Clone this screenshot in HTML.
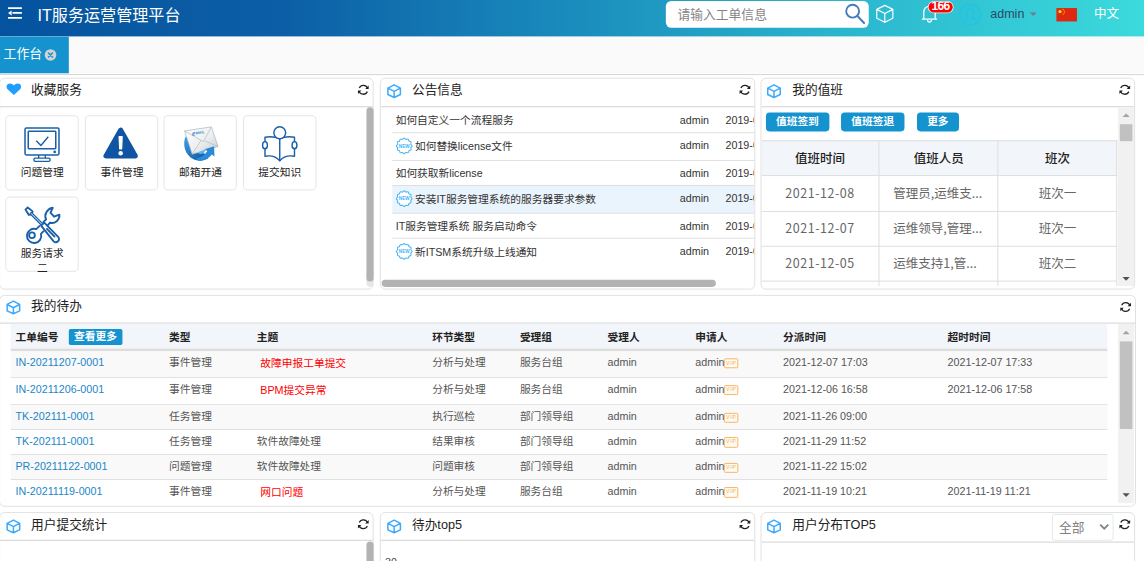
<!DOCTYPE html>
<html lang="zh-CN">
<head>
<meta charset="utf-8">
<title>IT服务运营管理平台</title>
<style>
*{box-sizing:border-box;margin:0;padding:0}
html,body{width:1144px;height:561px;overflow:hidden;background:#fff}
body{font-family:"Liberation Sans","Noto Sans CJK SC",sans-serif;font-size:12px;color:#333}
#root{position:absolute;left:0;top:0;width:1280px;height:628px;transform:scale(0.89375);transform-origin:0 0;overflow:hidden;background:#fff}
svg{display:block;overflow:visible}
/* header */
#hdr{position:absolute;left:0;top:0;width:1280px;height:41.4px;background:linear-gradient(90deg,#05539f 0%,#0c5fa6 25%,#1a8cbd 50%,#2bb8cf 75%,#3bdadc 100%)}
#hdr .menu{position:absolute;left:9px;top:8px}
#hdr .title{position:absolute;left:42px;top:0.8px;line-height:34px;font-size:18px;color:#fff;white-space:nowrap}
#search{position:absolute;left:745px;top:1px;width:227px;height:30px;background:#fff;border-radius:6px}
#search span{position:absolute;left:13px;top:1px;line-height:29px;font-size:14.3px;color:#858585}
#search svg{position:absolute;left:199px;top:2px}
.hi{position:absolute}
#badge{position:absolute;left:1038.6px;top:1.6px;width:27.6px;height:12.6px;border-radius:6.3px;background:#f00;color:#fff;font-size:13.5px;font-weight:bold;line-height:10.6px;text-align:center;white-space:nowrap;letter-spacing:-0.7px;overflow:hidden;box-shadow:0 0 0 0.9px rgba(255,255,255,.85)}
#user{position:absolute;left:1108px;top:0;line-height:31px;font-size:14px;color:#2b4a66;white-space:nowrap}
#caret{position:absolute;left:1152px;top:14px;width:0;height:0;border-left:4px solid transparent;border-right:4px solid transparent;border-top:4px solid #6f7f8a}
#flag{position:absolute;left:1182px;top:9px;width:23px;height:15px;background:#de2910}
#lang{position:absolute;left:1224px;top:0;line-height:30px;font-size:14px;color:#fff;white-space:nowrap}
/* tabs */
#tabs{position:absolute;left:0;top:41.4px;width:1280px;height:40.3px;background:#fafafa}
#tabline{position:absolute;left:0;top:82.8px;width:1280px;height:1.1px;background:#d0d0d0}
#tabs .tab{position:absolute;left:0;top:0;width:77px;height:40.3px;background:#1593cf;color:#fff;font-size:14.4px;line-height:38.6px;padding-left:4px;white-space:nowrap}
#tabs .x{position:absolute;left:50.3px;top:13.4px;width:13px;height:13px;border-radius:50%;background:#d2d2d2}
/* panels */
.panel{position:absolute;background:#fff;border:1px solid #ddd;border-radius:6px;overflow:hidden}
.ph{position:absolute;left:0;top:0;right:0;height:31.5px;border-bottom:1.1px solid #cdcdcd}
.ph .ic{position:absolute;left:6.8px;top:5.4px}
.ph.r3 .ic{top:7px}
.ph.r3 .t{top:2.2px}
.ph .t{position:absolute;left:34.8px;top:0.9px;line-height:23px;font-size:14.2px;color:#222;white-space:nowrap}
.ph .rf{position:absolute;right:4px;top:6px}
.pb{position:absolute;left:0;right:0;top:31.5px;bottom:0;overflow:hidden}
/* cards */
.card{position:absolute;width:82px;height:84px;border:1px solid #e2e2e2;border-radius:5px;background:#fff;text-align:center}
.card svg{position:absolute;left:19.5px;top:11px}
.card span{position:absolute;left:16px;width:48.5px;top:54.8px;line-height:16.4px;font-size:12px;color:#222}
.vsb{position:absolute;width:8px;border-radius:4px;background:#b3b3b3}
/* announce */
#ann{position:absolute;left:12.5px;top:-0.2px;width:500px;border-collapse:collapse;table-layout:fixed}
#ann td{font-size:12px;color:#333;padding:0 4px;white-space:nowrap;vertical-align:top;line-height:17px;padding-top:6.3px}
#ann tr.a td:first-child{padding-top:6.1px}
#ann tr.b td:first-child{padding-top:7.3px}
#ann tr.r1 td{padding-top:7.4px}
#ann tr.r1 td:first-child{padding-top:7.2px}
.aline{position:absolute;left:12.5px;width:500px;height:1.1px;background:#ddd}



.new{display:inline-block;vertical-align:middle;margin:-2px 2.2px 0 0.8px}
.new svg{display:block}
/* duty */
.btn{position:absolute;height:21px;border-radius:4px;background:#1593cf;color:#fff;font-weight:bold;font-size:12px;line-height:20px;text-align:center;white-space:nowrap}
#duty{position:absolute;left:-1.1px;top:37px;width:399.6px;border-collapse:collapse;table-layout:fixed;font-family:"Noto Sans CJK SC","Liberation Sans",sans-serif}
#duty th,#duty td{height:39.4px;border:1px solid #dadada;font-size:14px;text-align:center;white-space:nowrap;padding:0}
#duty th{background:#f2f5f9;font-weight:500;color:#222}
#duty td{color:#666}
#duty th{padding-bottom:2.2px}
#duty tr.u td{padding-bottom:2.4px}
#duty td:first-child{letter-spacing:0.6px}
#duty td:nth-child(2){text-align:left;padding-left:15px}
.wsb{position:absolute;width:18px;background:#f1f1f1}
.wsb .th{position:absolute;left:2px;width:14.2px;background:#c1c1c1}
.wsb .up{position:absolute;left:4.9px;top:7.5px;width:0;height:0;border-left:4.2px solid transparent;border-right:4.2px solid transparent;border-bottom:4.6px solid #a3a3a3}
.wsb .dn{position:absolute;left:4.9px;bottom:7px;width:0;height:0;border-left:4.2px solid transparent;border-right:4.2px solid transparent;border-top:4.6px solid #505050}
/* todo */
#todo{position:absolute;left:12.3px;top:0;width:1227px;border-collapse:collapse;table-layout:fixed}
#todo th,#todo td{font-size:12px;text-align:left;padding:0 5px;white-space:nowrap;overflow:hidden;vertical-align:top;line-height:17px}
#todo th{height:30.8px;color:#222;font-weight:bold;padding-top:6.5px}
#todo td{color:#555;padding-top:3.6px}
#todo tr.p1 td{padding-top:4.7px}
#todo tr.p2 td{padding-top:4.6px}
#todo tr.p3 td{padding-top:5.2px}
#todo tr.p4 td{padding-top:4.9px}
#todo tr.p5 td{padding-top:5.5px}
#todo tr.p6 td{padding-top:4.9px}
#todo a{color:#1a87c8;text-decoration:none}
#todo .red{color:#f00;padding-left:4px;position:relative;top:1px}
.stripe{position:absolute;left:12.3px;width:1227px}
.more{display:inline-block;margin-left:11.5px;padding:0 6px;height:17.5px;line-height:17px;position:relative;top:-0.5px;background:#1593cf;color:#fff;border-radius:2px;font-weight:bold;vertical-align:middle}
.vip{display:inline-block;width:16.2px;height:11.2px;border:1.2px solid #f7ad55;border-radius:1.5px;vertical-align:middle;margin:0.6px 0 0 -0.6px;font-size:6px;line-height:9.6px;letter-spacing:0.6px;color:#f6ad50;text-align:center;overflow:hidden;background:#fffaf2}
#sel{position:absolute;left:325.5px;top:1px;width:69px;height:30px;border:1px solid #dde6ec;border-radius:3px;background:#fff;font-size:14.2px;color:#808080;line-height:26.6px;padding-left:6.8px;font-family:"Noto Sans CJK SC",sans-serif}
</style>
</head>
<body>
<div id="root">
  <div id="hdr">
    <svg class="menu" width="16" height="13" viewBox="0 0 16 13"><path d="M0 1h15.5M5 6.5h10.5M0 12h15.5" stroke="#fff" stroke-width="1.9" fill="none"/><path d="M0 6.5l4-2.8v5.6z" fill="#fff"/></svg>
    <div class="title">IT服务运营管理平台</div>
    <div id="search"><span>请输入工单信息</span>
      <svg width="26" height="26" viewBox="0 0 26 26"><circle cx="10" cy="9.5" r="7.2" fill="none" stroke="#457bbd" stroke-width="2.1"/><path d="M15.5 15l7.3 7.8" stroke="#457bbd" stroke-width="2.3" stroke-linecap="round"/></svg>
    </div>
    <svg class="hi" style="left:980px;top:5px" width="20" height="21" viewBox="0 0 20 21"><path d="M10 1L1 5.5v10L10 20l9-4.5v-10zM1 5.5L10 10l9-4.5M10 10v10" fill="none" stroke="#fff" stroke-width="1.3" stroke-linejoin="round"/></svg>
    <svg class="hi" style="left:1031px;top:4.9px" width="18" height="21" viewBox="0 0 18 21"><path d="M2.6 16V9C2.6 4.5 5.3 2 9 2s6.4 2.5 6.4 7v7M0.5 16.5h17" fill="none" stroke="#fff" stroke-width="1.4"/><path d="M6.8 17.5a2.2 2.2 0 0 0 4.4 0" fill="none" stroke="#fff" stroke-width="1.3"/></svg>
    <div id="badge">166</div>
    <svg class="hi" style="left:1073px;top:3.6px" width="25" height="25" viewBox="0 0 25 25"><circle cx="12.5" cy="12.5" r="11.6" fill="none" stroke="#1fc3ea" stroke-width="1.5"/><path d="M5.5 18.5c1.5-1.8 4.3-1.8 5-3.5-1.3-1-2.2-2.6-2.2-4.6 0-2.6 1.7-4.4 4.2-4.4s4.2 1.8 4.2 4.4c0 2-0.9 3.6-2.2 4.6 0.7 1.7 3.5 1.7 5 3.5" fill="none" stroke="#1fc3ea" stroke-width="1.5" stroke-linecap="round"/></svg>
    <div id="user">admin</div><div id="caret"></div>
    <div id="flag"><svg width="23" height="15" viewBox="0 0 23 15"><circle cx="4" cy="4" r="1.8" fill="#ffde00"/><circle cx="7.5" cy="1.8" r="0.6" fill="#ffde00"/><circle cx="8.8" cy="3.3" r="0.6" fill="#ffde00"/><circle cx="8.8" cy="5.3" r="0.6" fill="#ffde00"/><circle cx="7.5" cy="6.8" r="0.6" fill="#ffde00"/></svg></div>
    <div id="lang">中文</div>
  </div>
  <div id="tabline"></div>
  <div id="tabs"><div class="tab">工作台</div>
    <div class="x"><svg width="13" height="13" viewBox="0 0 13 13"><path d="M4.3 4.3l4.4 4.4M8.7 4.3l-4.4 4.4" stroke="#1593cf" stroke-width="1.7" stroke-linecap="round"/></svg></div>
  </div>

  <!-- panel 1 -->
  <div class="panel" id="p1" style="left:-1px;top:87.3px;width:419.2px;height:237.1px">
    <div class="ph">
      <svg class="ic" style="left:7px;top:4.6px" width="17" height="13.8" preserveAspectRatio="none" viewBox="0 0 17 15"><path d="M8.5 14.5L1.5 7.5C-0.8 5 0.5 0.5 4.3 0.5 6.3 0.5 7.8 1.7 8.5 3 9.2 1.7 10.7 0.5 12.7 0.5 16.5 0.5 17.8 5 15.5 7.5z" fill="#1e9fff"/></svg>
      <div class="t">收藏服务</div>
      <svg class="rf" width="13" height="13" viewBox="0 0 13 13"><path d="M11.3 5A5 5 0 0 0 2 4.5M1.7 8a5 5 0 0 0 9.3 0.5" fill="none" stroke="#222" stroke-width="1.45"/><path d="M12.5 1.8v3.9H8.6zM0.5 11.2V7.3h3.9z" fill="#222"/></svg>
    </div>
    <div class="pb">
      <div class="card" style="left:6.1px;top:9.6px">
        <svg style="top:11.7px" width="40" height="40" viewBox="0 0 40 40"><g fill="none" stroke="#1a5fa8" stroke-width="1.7"><rect x="1" y="1.3" width="38" height="30" rx="1.5"/><rect x="4.6" y="4.8" width="30.8" height="19.6" rx="0.8"/><path d="M13.5 15.5l5.3 5.2 8.2-9.7" stroke-width="1.6"/><path d="M16.3 31.5v3.3M23.7 31.5v3.3" stroke-width="1.5"/><rect x="11" y="35" width="18" height="3.6" rx="1.2" stroke-width="1.5"/></g><circle cx="34.2" cy="28" r="1.5" fill="#1a5fa8"/></svg>
        <span>问题管理</span></div>
      <div class="card" style="left:95.3px;top:9.6px">
        <svg style="left:18.6px" width="40" height="40" viewBox="0 0 40 40"><path d="M20 4.5L3.5 33.5h33z" fill="#0f55a3" stroke="#0f55a3" stroke-width="5.5" stroke-linejoin="round"/><path d="M18.3 12h3.4l-0.6 13.5h-2.2z" fill="#fff" stroke="#fff" stroke-width="1.4" stroke-linejoin="round"/><circle cx="20" cy="30.5" r="2.5" fill="#fff"/></svg>
        <span>事件管理</span></div>
      <div class="card" style="left:183.1px;top:9.6px">
        <svg style="left:20px" width="40" height="40" viewBox="0 0 40 40"><defs><linearGradient id="eg" x1="0" y1="0" x2="1" y2="1"><stop offset="0" stop-color="#ffffff"/><stop offset="0.55" stop-color="#eceef0"/><stop offset="1" stop-color="#c4c9cf"/></linearGradient><linearGradient id="bg" x1="0" y1="0" x2="1" y2="1"><stop offset="0" stop-color="#3fa2e6"/><stop offset="1" stop-color="#0a4f9c"/></linearGradient></defs><path d="M3.5 12c-3.5 9-0.5 20 8.5 25 6 3 12 2 17-1l-5-6c-5 2-10 0-13-5-2-4-2-8-1-12z" fill="url(#bg)"/><path d="M2.5 5.5L32.5 1l7.5 22L11 31.5z" fill="url(#eg)" stroke="#aeb4bb" stroke-width="0.8"/><path d="M2.5 5.5L23.5 17.5 32.5 1M11 31.5l10-15.5M40 23L25 16.5" fill="none" stroke="#b5bbc2" stroke-width="0.8"/><path d="M15 36.5c6-1 10-4 13-8.5l-3-2 10.5-3.5 0.5 11.5-3-2c-3 4-8 7-14 7z" fill="#2b8ad8"/><path d="M17 30l9-4-2 5z" fill="#5bb3ee"/><text x="11" y="11" font-size="9" font-weight="bold" font-style="italic" fill="#2a8ad2" font-family="Liberation Serif,serif" transform="rotate(-9 12 10)">e<tspan font-size="4.2" font-family="Liberation Sans,sans-serif" dy="-1">MAIL</tspan></text></svg>
        <span>邮箱开通</span></div>
      <div class="card" style="left:271.8px;top:9.6px">
        <svg style="left:20.6px" width="40" height="40" viewBox="0 0 40 40"><g fill="#fff" stroke="#1a5fa8" stroke-width="1.6" stroke-linejoin="round"><path d="M20 14.5c-4.5-2.5-10.5-3-16.5-2v21.3c6-1 12-0.5 16.5 5.2 4.5-5.7 10.5-6.2 16.5-5.2V12.5c-6-1-12-0.5-16.5 2z"/><path d="M20 14.5V39" fill="none"/><circle cx="20" cy="7.5" r="6.6"/><ellipse cx="3.5" cy="21.5" rx="2.7" ry="4"/><ellipse cx="36.5" cy="21.5" rx="2.7" ry="4"/></g></svg>
        <span>提交知识</span></div>
      <div class="card" style="left:6.1px;top:99.8px;height:84.8px">
        <svg style="top:10px" width="40" height="40" viewBox="0 0 40 40"><g fill="none" stroke="#1a5fa8" stroke-width="2.1" stroke-linejoin="round" stroke-linecap="round"><path d="M1.5 3.5L4 1.2l5.5 4.3-1 3.3-3.2 0.7z"/><path d="M8 8l12.5 12.5" stroke-width="3.6"/><path d="M8 8l12.5 12.5" stroke="#fff" stroke-width="1"/><path d="M19 21.5l3.5-3.5 15.3 15.7c1.7 1.7 1.7 3.8 0.2 5.2s-3.6 1.5-5.2-0.2z" fill="#fff"/><path d="M25.5 25l8.5 8.7"/><path d="M24.5 14.5c-2.5-5.5 1.5-12 7.5-13l-2.5 5.5 4 4.5 6-2.3c0.5 6-5 10.5-10.5 9"/><path d="M24.5 14.5l-3 3M29 18.2l-2.5 2.8"/><path d="M17 22l-3.5 3.3a8 8 0 1 0 5.3 5.3l3-3"/><circle cx="8.8" cy="32.2" r="3.2"/></g></svg>
        <span style="top:55.4px">服务请求二</span></div>
      
    </div>
  </div>

  <!-- panel 2 -->
  <div class="panel" id="p2" style="left:425.2px;top:87.3px;width:419.6px;height:237.1px">
    <div class="ph">
      <svg class="ic" width="16" height="16" viewBox="0 0 16 16"><path d="M8 0.9L1 4.6v7.2L8 15.1l7-3.3V4.6zM1.6 4.9L8 8.3l6.4-3.4M8 8.3v6.5" fill="none" stroke="#3caaff" stroke-width="1.7" stroke-linejoin="round"/></svg>
      <div class="t">公告信息</div>
      <svg class="rf" width="13" height="13" viewBox="0 0 13 13"><path d="M11.3 5A5 5 0 0 0 2 4.5M1.7 8a5 5 0 0 0 9.3 0.5" fill="none" stroke="#222" stroke-width="1.45"/><path d="M12.5 1.8v3.9H8.6zM0.5 11.2V7.3h3.9z" fill="#222"/></svg>
    </div>
    <div class="pb">
      <div class="aline" style="top:87.7px;height:31.3px;background:#eaf4fc"></div><div class="aline" style="top:28.0px"></div><div class="aline" style="top:59.2px"></div><div class="aline" style="top:87.2px"></div><div class="aline" style="top:118.5px"></div><div class="aline" style="top:146.2px"></div>
      <table id="ann"><colgroup><col style="width:318px"><col style="width:51px"><col style="width:132px"></colgroup>
        <tr class="a r1" style="height:28.7px"><td>如何自定义一个流程服务</td><td>admin</td><td>2019-05-21 10:20:31</td></tr>
        <tr class="b" style="height:31.2px"><td><span class="new"><svg width="18.6" height="18.6" viewBox="0 0 18 18"><path d="M17.5 9.0L17.4 9.4L17.1 9.7L16.8 10.0L16.5 10.3L16.2 10.6L16.1 10.9L16.1 11.2L16.2 11.6L16.3 12.0L16.4 12.5L16.4 12.9L16.3 13.2L16.1 13.5L15.7 13.7L15.3 13.8L14.8 13.9L14.5 14.0L14.2 14.2L14.0 14.5L13.9 14.8L13.8 15.3L13.7 15.7L13.5 16.1L13.2 16.3L12.9 16.4L12.5 16.4L12.0 16.3L11.6 16.2L11.2 16.1L10.9 16.1L10.6 16.2L10.3 16.5L10.0 16.8L9.7 17.1L9.4 17.4L9.0 17.5L8.6 17.4L8.3 17.1L8.0 16.8L7.7 16.5L7.4 16.2L7.1 16.1L6.8 16.1L6.4 16.2L6.0 16.3L5.5 16.4L5.1 16.4L4.8 16.3L4.5 16.1L4.3 15.7L4.2 15.3L4.1 14.8L4.0 14.5L3.8 14.2L3.5 14.0L3.2 13.9L2.7 13.8L2.3 13.7L1.9 13.5L1.7 13.2L1.6 12.9L1.6 12.5L1.7 12.0L1.8 11.6L1.9 11.2L1.9 10.9L1.8 10.6L1.5 10.3L1.2 10.0L0.9 9.7L0.6 9.4L0.5 9.0L0.6 8.6L0.9 8.3L1.2 8.0L1.5 7.7L1.8 7.4L1.9 7.1L1.9 6.8L1.8 6.4L1.7 6.0L1.6 5.5L1.6 5.1L1.7 4.8L1.9 4.5L2.3 4.3L2.7 4.2L3.2 4.1L3.5 4.0L3.8 3.8L4.0 3.5L4.1 3.2L4.2 2.7L4.3 2.3L4.5 1.9L4.8 1.7L5.1 1.6L5.5 1.6L6.0 1.7L6.4 1.8L6.8 1.9L7.1 1.9L7.4 1.8L7.7 1.5L8.0 1.2L8.3 0.9L8.6 0.6L9.0 0.5L9.4 0.6L9.7 0.9L10.0 1.2L10.3 1.5L10.6 1.8L10.9 1.9L11.2 1.9L11.6 1.8L12.0 1.7L12.5 1.6L12.9 1.6L13.2 1.7L13.5 1.9L13.7 2.3L13.8 2.7L13.9 3.2L14.0 3.5L14.2 3.8L14.5 4.0L14.8 4.1L15.3 4.2L15.7 4.3L16.1 4.5L16.3 4.8L16.4 5.1L16.4 5.5L16.3 6.0L16.2 6.4L16.1 6.8L16.1 7.1L16.2 7.4L16.5 7.7L16.8 8.0L17.1 8.3L17.4 8.6z" fill="#fff" stroke="#45b4f5" stroke-width="1.1" stroke-linejoin="round"/><text x="9" y="10.8" font-size="5" font-weight="bold" fill="#45b4f5" text-anchor="middle" font-family="Liberation Sans,sans-serif">NEW</text></svg></span>如何替换license文件</td><td>admin</td><td>2019-05-21 10:18:05</td></tr>
        <tr class="a" style="height:28.0px"><td>如何获取新license</td><td>admin</td><td>2019-05-21 10:15:42</td></tr>
        <tr class="b hl" style="height:31.3px"><td><span class="new"><svg width="18.6" height="18.6" viewBox="0 0 18 18"><path d="M17.5 9.0L17.4 9.4L17.1 9.7L16.8 10.0L16.5 10.3L16.2 10.6L16.1 10.9L16.1 11.2L16.2 11.6L16.3 12.0L16.4 12.5L16.4 12.9L16.3 13.2L16.1 13.5L15.7 13.7L15.3 13.8L14.8 13.9L14.5 14.0L14.2 14.2L14.0 14.5L13.9 14.8L13.8 15.3L13.7 15.7L13.5 16.1L13.2 16.3L12.9 16.4L12.5 16.4L12.0 16.3L11.6 16.2L11.2 16.1L10.9 16.1L10.6 16.2L10.3 16.5L10.0 16.8L9.7 17.1L9.4 17.4L9.0 17.5L8.6 17.4L8.3 17.1L8.0 16.8L7.7 16.5L7.4 16.2L7.1 16.1L6.8 16.1L6.4 16.2L6.0 16.3L5.5 16.4L5.1 16.4L4.8 16.3L4.5 16.1L4.3 15.7L4.2 15.3L4.1 14.8L4.0 14.5L3.8 14.2L3.5 14.0L3.2 13.9L2.7 13.8L2.3 13.7L1.9 13.5L1.7 13.2L1.6 12.9L1.6 12.5L1.7 12.0L1.8 11.6L1.9 11.2L1.9 10.9L1.8 10.6L1.5 10.3L1.2 10.0L0.9 9.7L0.6 9.4L0.5 9.0L0.6 8.6L0.9 8.3L1.2 8.0L1.5 7.7L1.8 7.4L1.9 7.1L1.9 6.8L1.8 6.4L1.7 6.0L1.6 5.5L1.6 5.1L1.7 4.8L1.9 4.5L2.3 4.3L2.7 4.2L3.2 4.1L3.5 4.0L3.8 3.8L4.0 3.5L4.1 3.2L4.2 2.7L4.3 2.3L4.5 1.9L4.8 1.7L5.1 1.6L5.5 1.6L6.0 1.7L6.4 1.8L6.8 1.9L7.1 1.9L7.4 1.8L7.7 1.5L8.0 1.2L8.3 0.9L8.6 0.6L9.0 0.5L9.4 0.6L9.7 0.9L10.0 1.2L10.3 1.5L10.6 1.8L10.9 1.9L11.2 1.9L11.6 1.8L12.0 1.7L12.5 1.6L12.9 1.6L13.2 1.7L13.5 1.9L13.7 2.3L13.8 2.7L13.9 3.2L14.0 3.5L14.2 3.8L14.5 4.0L14.8 4.1L15.3 4.2L15.7 4.3L16.1 4.5L16.3 4.8L16.4 5.1L16.4 5.5L16.3 6.0L16.2 6.4L16.1 6.8L16.1 7.1L16.2 7.4L16.5 7.7L16.8 8.0L17.1 8.3L17.4 8.6z" fill="#fff" stroke="#45b4f5" stroke-width="1.1" stroke-linejoin="round"/><text x="9" y="10.8" font-size="5" font-weight="bold" fill="#45b4f5" text-anchor="middle" font-family="Liberation Sans,sans-serif">NEW</text></svg></span>安装IT服务管理系统的服务器要求参数</td><td>admin</td><td>2019-05-21 10:12:16</td></tr>
        <tr class="a" style="height:27.7px"><td>IT服务管理系统 服务启动命令</td><td>admin</td><td>2019-05-21 10:09:47</td></tr>
        <tr class="b" style="height:31.0px"><td><span class="new"><svg width="18.6" height="18.6" viewBox="0 0 18 18"><path d="M17.5 9.0L17.4 9.4L17.1 9.7L16.8 10.0L16.5 10.3L16.2 10.6L16.1 10.9L16.1 11.2L16.2 11.6L16.3 12.0L16.4 12.5L16.4 12.9L16.3 13.2L16.1 13.5L15.7 13.7L15.3 13.8L14.8 13.9L14.5 14.0L14.2 14.2L14.0 14.5L13.9 14.8L13.8 15.3L13.7 15.7L13.5 16.1L13.2 16.3L12.9 16.4L12.5 16.4L12.0 16.3L11.6 16.2L11.2 16.1L10.9 16.1L10.6 16.2L10.3 16.5L10.0 16.8L9.7 17.1L9.4 17.4L9.0 17.5L8.6 17.4L8.3 17.1L8.0 16.8L7.7 16.5L7.4 16.2L7.1 16.1L6.8 16.1L6.4 16.2L6.0 16.3L5.5 16.4L5.1 16.4L4.8 16.3L4.5 16.1L4.3 15.7L4.2 15.3L4.1 14.8L4.0 14.5L3.8 14.2L3.5 14.0L3.2 13.9L2.7 13.8L2.3 13.7L1.9 13.5L1.7 13.2L1.6 12.9L1.6 12.5L1.7 12.0L1.8 11.6L1.9 11.2L1.9 10.9L1.8 10.6L1.5 10.3L1.2 10.0L0.9 9.7L0.6 9.4L0.5 9.0L0.6 8.6L0.9 8.3L1.2 8.0L1.5 7.7L1.8 7.4L1.9 7.1L1.9 6.8L1.8 6.4L1.7 6.0L1.6 5.5L1.6 5.1L1.7 4.8L1.9 4.5L2.3 4.3L2.7 4.2L3.2 4.1L3.5 4.0L3.8 3.8L4.0 3.5L4.1 3.2L4.2 2.7L4.3 2.3L4.5 1.9L4.8 1.7L5.1 1.6L5.5 1.6L6.0 1.7L6.4 1.8L6.8 1.9L7.1 1.9L7.4 1.8L7.7 1.5L8.0 1.2L8.3 0.9L8.6 0.6L9.0 0.5L9.4 0.6L9.7 0.9L10.0 1.2L10.3 1.5L10.6 1.8L10.9 1.9L11.2 1.9L11.6 1.8L12.0 1.7L12.5 1.6L12.9 1.6L13.2 1.7L13.5 1.9L13.7 2.3L13.8 2.7L13.9 3.2L14.0 3.5L14.2 3.8L14.5 4.0L14.8 4.1L15.3 4.2L15.7 4.3L16.1 4.5L16.3 4.8L16.4 5.1L16.4 5.5L16.3 6.0L16.2 6.4L16.1 6.8L16.1 7.1L16.2 7.4L16.5 7.7L16.8 8.0L17.1 8.3L17.4 8.6z" fill="#fff" stroke="#45b4f5" stroke-width="1.1" stroke-linejoin="round"/><text x="9" y="10.8" font-size="5" font-weight="bold" fill="#45b4f5" text-anchor="middle" font-family="Liberation Sans,sans-serif">NEW</text></svg></span>新ITSM系统升级上线通知</td><td>admin</td><td>2019-05-21 10:05:33</td></tr>
      </table>
      <div style="position:absolute;left:1px;top:193px;width:374px;height:8px;border-radius:4px;background:#b3b3b3"></div>
    </div>
  </div>

  <!-- panel 3 -->
  <div class="panel" id="p3" style="left:850.7px;top:87.3px;width:419.2px;height:237.1px">
    <div class="ph">
      <svg class="ic" width="16" height="16" viewBox="0 0 16 16"><path d="M8 0.9L1 4.6v7.2L8 15.1l7-3.3V4.6zM1.6 4.9L8 8.3l6.4-3.4M8 8.3v6.5" fill="none" stroke="#3caaff" stroke-width="1.7" stroke-linejoin="round"/></svg>
      <div class="t">我的值班</div>
      <svg class="rf" width="13" height="13" viewBox="0 0 13 13"><path d="M11.3 5A5 5 0 0 0 2 4.5M1.7 8a5 5 0 0 0 9.3 0.5" fill="none" stroke="#222" stroke-width="1.45"/><path d="M12.5 1.8v3.9H8.6zM0.5 11.2V7.3h3.9z" fill="#222"/></svg>
    </div>
    <div class="pb" style="bottom:3px">
      <div class="btn" style="left:5px;top:6px;width:71px">值班签到</div>
      <div class="btn" style="left:89.2px;top:6px;width:71.4px">值班签退</div>
      <div class="btn" style="left:174.2px;top:6px;width:47px">更多</div>
      <table id="duty">
        <tr><th>值班时间</th><th>值班人员</th><th>班次</th></tr>
        <tr><td>2021-12-08</td><td>管理员,运维支...</td><td>班次一</td></tr>
        <tr class="u"><td>2021-12-07</td><td>运维领导,管理...</td><td>班次一</td></tr>
        <tr class="u"><td>2021-12-05</td><td>运维支持1,管...</td><td>班次二</td></tr>
        <tr><td>2021-12-04</td><td>运维支持2</td><td>班次一</td></tr>
      </table>
      <div class="wsb" style="left:399.3px;top:0;height:201px"><div class="up"></div><div class="th" style="top:19px;height:19px"></div><div class="dn"></div></div>
    </div>
  </div>

  <!-- panel 4 -->
  <div class="panel" id="p4" style="left:-1px;top:329.6px;width:1271.8px;height:237.5px">
    <div class="ph">
      <svg class="ic" width="16" height="16" viewBox="0 0 16 16"><path d="M8 0.9L1 4.6v7.2L8 15.1l7-3.3V4.6zM1.6 4.9L8 8.3l6.4-3.4M8 8.3v6.5" fill="none" stroke="#3caaff" stroke-width="1.7" stroke-linejoin="round"/></svg>
      <div class="t">我的待办</div>
      <svg class="rf" width="13" height="13" viewBox="0 0 13 13"><path d="M11.3 5A5 5 0 0 0 2 4.5M1.7 8a5 5 0 0 0 9.3 0.5" fill="none" stroke="#222" stroke-width="1.45"/><path d="M12.5 1.8v3.9H8.6zM0.5 11.2V7.3h3.9z" fill="#222"/></svg>
    </div>
    <div class="pb" style="bottom:3px">
      <div class="stripe" style="top:0;height:28.4px;background:#f2f5f9"></div><div class="stripe" style="top:28.4px;height:2.4px;background:#ddd"></div><div class="stripe" style="top:30.8px;height:29.0px;background:#f9f9f9"></div><div class="stripe" style="top:59.8px;height:1.1px;background:#ddd"></div><div class="stripe" style="top:89.7px;height:1.1px;background:#ddd"></div><div class="stripe" style="top:90.8px;height:27.0px;background:#f9f9f9"></div><div class="stripe" style="top:117.8px;height:1.1px;background:#ddd"></div><div class="stripe" style="top:145.7px;height:1.1px;background:#ddd"></div><div class="stripe" style="top:146.8px;height:27.0px;background:#f9f9f9"></div><div class="stripe" style="top:173.8px;height:1.1px;background:#ddd"></div>
      <table id="todo"><colgroup><col style="width:14%"><col style="width:8%"><col style="width:16%"><col style="width:8%"><col style="width:8%"><col style="width:8%"><col style="width:8%"><col style="width:15%"><col style="width:15%"></colgroup>
        <tr><th>工单编号<span class="more">查看更多</span></th><th>类型</th><th>主题</th><th>环节类型</th><th>受理组</th><th>受理人</th><th>申请人</th><th>分派时间</th><th>超时时间</th></tr>
        <tr class="p1" style="height:30.1px"><td><a>IN-20211207-0001</a></td><td>事件管理</td><td><span class="red">故障申报工单提交</span></td><td>分析与处理</td><td>服务台组</td><td>admin</td><td>admin<span class="vip">VIP</span></td><td>2021-12-07 17:03</td><td>2021-12-07 17:33</td></tr>
        <tr class="p2" style="height:29.9px"><td><a>IN-20211206-0001</a></td><td>事件管理</td><td><span class="red">BPM提交异常</span></td><td>分析与处理</td><td>服务台组</td><td>admin</td><td>admin<span class="vip">VIP</span></td><td>2021-12-06 16:58</td><td>2021-12-06 17:58</td></tr>
        <tr class="p3" style="height:28.1px"><td><a>TK-202111-0001</a></td><td>任务管理</td><td></td><td>执行巡检</td><td>部门领导组</td><td>admin</td><td>admin<span class="vip">VIP</span></td><td>2021-11-26 09:00</td><td></td></tr>
        <tr class="p4" style="height:27.9px"><td><a>TK-202111-0001</a></td><td>任务管理</td><td>软件故障处理</td><td>结果审核</td><td>部门领导组</td><td>admin</td><td>admin<span class="vip">VIP</span></td><td>2021-11-29 11:52</td><td></td></tr>
        <tr class="p5" style="height:28.1px"><td><a>PR-20211122-0001</a></td><td>问题管理</td><td>软件故障处理</td><td>问题审核</td><td>部门领导组</td><td>admin</td><td>admin<span class="vip">VIP</span></td><td>2021-11-22 15:02</td><td></td></tr>
        <tr class="p6" style="height:28.0px"><td><a>IN-20211119-0001</a></td><td>事件管理</td><td><span class="red">网口问题</span></td><td>分析与处理</td><td>服务台组</td><td>admin</td><td>admin<span class="vip">VIP</span></td><td>2021-11-19 10:21</td><td>2021-11-19 11:21</td></tr>
      </table>
      <div class="wsb" style="left:1251.2px;top:0;height:201px"><div class="up"></div><div class="th" style="top:19.5px;height:98.5px"></div><div class="dn"></div></div>
    </div>
  </div>

  <!-- row 3 -->
  <div class="panel" id="p5" style="left:-1px;top:572.8px;width:419.2px;height:237px">
    <div class="ph r3">
      <svg class="ic" width="16" height="16" viewBox="0 0 16 16"><path d="M8 0.9L1 4.6v7.2L8 15.1l7-3.3V4.6zM1.6 4.9L8 8.3l6.4-3.4M8 8.3v6.5" fill="none" stroke="#3caaff" stroke-width="1.7" stroke-linejoin="round"/></svg>
      <div class="t">用户提交统计</div>
      <svg class="rf" width="13" height="13" viewBox="0 0 13 13"><path d="M11.3 5A5 5 0 0 0 2 4.5M1.7 8a5 5 0 0 0 9.3 0.5" fill="none" stroke="#222" stroke-width="1.45"/><path d="M12.5 1.8v3.9H8.6zM0.5 11.2V7.3h3.9z" fill="#222"/></svg>
    </div>
    <div class="pb"></div>
  </div>
  <div class="panel" id="p6" style="left:425.2px;top:572.8px;width:419.6px;height:237px">
    <div class="ph r3">
      <svg class="ic" width="16" height="16" viewBox="0 0 16 16"><path d="M8 0.9L1 4.6v7.2L8 15.1l7-3.3V4.6zM1.6 4.9L8 8.3l6.4-3.4M8 8.3v6.5" fill="none" stroke="#3caaff" stroke-width="1.7" stroke-linejoin="round"/></svg>
      <div class="t">待办top5</div>
      <svg class="rf" width="13" height="13" viewBox="0 0 13 13"><path d="M11.3 5A5 5 0 0 0 2 4.5M1.7 8a5 5 0 0 0 9.3 0.5" fill="none" stroke="#222" stroke-width="1.45"/><path d="M12.5 1.8v3.9H8.6zM0.5 11.2V7.3h3.9z" fill="#222"/></svg>
    </div>
    <div class="pb"><div style="position:absolute;left:4.6px;top:17px;font-size:12px;line-height:14px;color:#444">30</div></div>
  </div>
  <div class="panel" id="p7" style="left:850.7px;top:572.8px;width:419.2px;height:237px">
    <div class="ph r3" style="height:33.3px">
      <svg class="ic" width="16" height="16" viewBox="0 0 16 16"><path d="M8 0.9L1 4.6v7.2L8 15.1l7-3.3V4.6zM1.6 4.9L8 8.3l6.4-3.4M8 8.3v6.5" fill="none" stroke="#3caaff" stroke-width="1.7" stroke-linejoin="round"/></svg>
      <div class="t">用户分布TOP5</div>
      <div id="sel">全部<svg style="position:absolute;right:4.5px;top:10.5px" width="11" height="7" viewBox="0 0 11 7"><path d="M1 1l4.5 4.5 4.5-4.5" fill="none" stroke="#858585" stroke-width="2.1"/></svg></div>
      <svg class="rf" width="13" height="13" viewBox="0 0 13 13"><path d="M11.3 5A5 5 0 0 0 2 4.5M1.7 8a5 5 0 0 0 9.3 0.5" fill="none" stroke="#222" stroke-width="1.45"/><path d="M12.5 1.8v3.9H8.6zM0.5 11.2V7.3h3.9z" fill="#222"/></svg>
    </div>
  </div>
  <div style="position:absolute;left:409.6px;top:305px;width:8.4px;height:16.3px;background:#e6e6e6;border-radius:0 0 4.4px 4.4px"></div>
  <div class="vsb" style="left:409.6px;top:119.8px;height:195.6px;width:8.4px"></div>
  <div class="vsb" style="left:409.6px;top:605.6px;height:60px;width:8.4px"></div>
</div>
</body>
</html>
